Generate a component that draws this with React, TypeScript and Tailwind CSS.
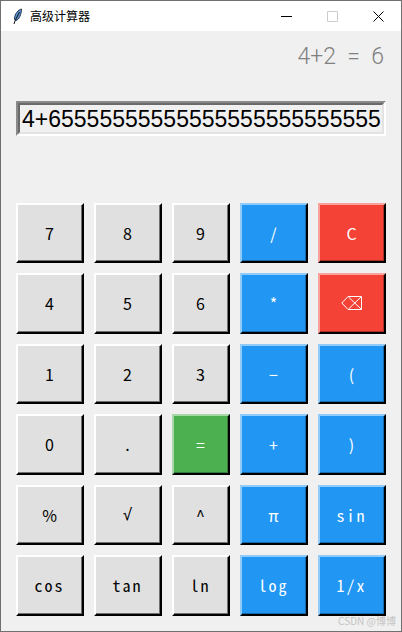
type Tone = "gray" | "blue" | "red" | "green";

type Key = {
  label: string;
  tone: Tone;
};

const keys: Key[] = [
  { label: "7", tone: "gray" },
  { label: "8", tone: "gray" },
  { label: "9", tone: "gray" },
  { label: "/", tone: "blue" },
  { label: "C", tone: "red" },
  { label: "4", tone: "gray" },
  { label: "5", tone: "gray" },
  { label: "6", tone: "gray" },
  { label: "*", tone: "blue" },
  { label: "⌫", tone: "red" },
  { label: "1", tone: "gray" },
  { label: "2", tone: "gray" },
  { label: "3", tone: "gray" },
  { label: "−", tone: "blue" },
  { label: "(", tone: "blue" },
  { label: "0", tone: "gray" },
  { label: ".", tone: "gray" },
  { label: "=", tone: "green" },
  { label: "+", tone: "blue" },
  { label: ")", tone: "blue" },
  { label: "%", tone: "gray" },
  { label: "√", tone: "gray" },
  { label: "^", tone: "gray" },
  { label: "π", tone: "blue" },
  { label: "sin", tone: "blue" },
  { label: "cos", tone: "gray" },
  { label: "tan", tone: "gray" },
  { label: "ln", tone: "gray" },
  { label: "log", tone: "blue" },
  { label: "1/x", tone: "blue" },
];

const outerTone: Record<Tone, string> = {
  gray: "border-t-white border-l-white",
  blue: "border-t-[#90cbf9] border-l-[#90cbf9]",
  red: "border-t-[#f9a19a] border-l-[#f9a19a]",
  green: "border-t-[#a5d7a7] border-l-[#a5d7a7]",
};

const innerTone: Record<Tone, string> = {
  gray: "bg-[#e0e0e0] border-[#707070] text-black",
  blue: "bg-[#2196f3] border-[#1769aa] text-white",
  red: "bg-[#f44336] border-[#aa2f26] text-white",
  green: "bg-[#4caf50] border-[#357a38] text-white",
};

const Feather = () => (
  <svg width="10" height="17" viewBox="0 0 10 17" fill="none">
    <path d="M8.5 1C5 2 2 5.5 1.5 10c-.2 1.5.5 2.5 1.5 2.500C6 12 8.500 6 8.500 1Z" fill="#5b8fd0" stroke="#1c2c44" strokeWidth="0.9" />
    <path d="M6.500 4 2.200 12.500 1 16" stroke="#111" strokeWidth="1" />
  </svg>
);

const BackspaceGlyph = () => (
  <svg width="21" height="14" viewBox="0 0 21 14" fill="none" stroke="white" strokeWidth="1" aria-label="⌫">
    <path d="M.8 7 7 .5h13.500v13H7Z" />
    <path d="m7.500 1 12.500 12M20 1 7.500 13" />
  </svg>
);

const labelFont = (label: string) => {
  if (label === "√") return "font-['DejaVu_Sans_Mono',monospace]";
  if (label.length > 1) return "font-['Noto_Sans_Mono_CJK_SC','Noto_Sans_CJK_SC',monospace] tracking-[2px]";
  return "font-['Noto_Sans_CJK_SC',sans-serif]";
};

const CalcKey = ({ label, tone }: Key) => (
  <div
    className={`flex border-2 border-r-black border-b-black ${outerTone[tone]}`}
  >
    <div
      className={`flex flex-1 items-center justify-center border-r border-b text-[16px] ${labelFont(label)} ${innerTone[tone]}`}
    >
      {label === "⌫" ? <BackspaceGlyph /> : label}
    </div>
  </div>
);

export default function App() {
  return (
    <div className="relative flex h-[632px] w-[402px] flex-col overflow-hidden border border-[#707070] bg-[#f0f0f0]">
      <div className="flex h-[30px] shrink-0 items-center bg-white pl-[12px]">
        <Feather />
        <span className="ml-[7px] font-['Noto_Sans_CJK_SC',sans-serif] text-[12px] text-black">
          高级计算器
        </span>
        <div className="ml-auto flex items-center">
          <div className="flex w-[46px] justify-center">
            <svg width="11" height="11" viewBox="0 0 11 11">
              <path d="M0 5.500h11" stroke="black" strokeWidth="1" />
            </svg>
          </div>
          <div className="flex w-[46px] justify-center">
            <svg width="11" height="11" viewBox="0 0 11 11" fill="none">
              <path d="M.5.500h10v10H.5Z" stroke="#cccccc" strokeWidth="1" />
            </svg>
          </div>
          <div className="flex w-[46px] justify-center">
            <svg width="11" height="11" viewBox="0 0 11 11" fill="none">
              <path d="m.5.500 10 10m0-10-10 10" stroke="black" strokeWidth="1" />
            </svg>
          </div>
        </div>
      </div>

      <div className="mt-[13px] whitespace-pre pr-[17px] text-right font-['Roboto',sans-serif] text-[23px] font-light leading-[26px] text-[#808080]">
        {"4+2  =  6"}
      </div>

      <div className="mx-[15px] mt-[31px] h-[35px] border-[2px] border-t-[#8a8a8a] border-l-[#8a8a8a] border-r-white border-b-white">
        <div className="h-full whitespace-nowrap border-[2px] border-t-[#696969] border-l-[#696969] border-r-[#e3e3e3] border-b-[#e3e3e3] pl-[2px] font-['Liberation_Sans',sans-serif] text-[23px] leading-[28px] text-black">
          4+65555555555555555555555555
        </div>
      </div>

      <div className="mx-[15px] mt-[67px] grid grid-cols-[68px_68px_58px_68px_68px] grid-rows-[60px_61px_60px_61px_60px_61px] gap-x-[10px] gap-y-[10px]">
        {keys.map((key) => (
          <CalcKey key={key.label} {...key} />
        ))}
      </div>

      <span className="absolute bottom-[4px] right-[5px] font-['Noto_Sans_CJK_SC',sans-serif] text-[10px] leading-[12px] text-[#c4c4c4]">
        CSDN @博博
      </span>
    </div>
  );
}
